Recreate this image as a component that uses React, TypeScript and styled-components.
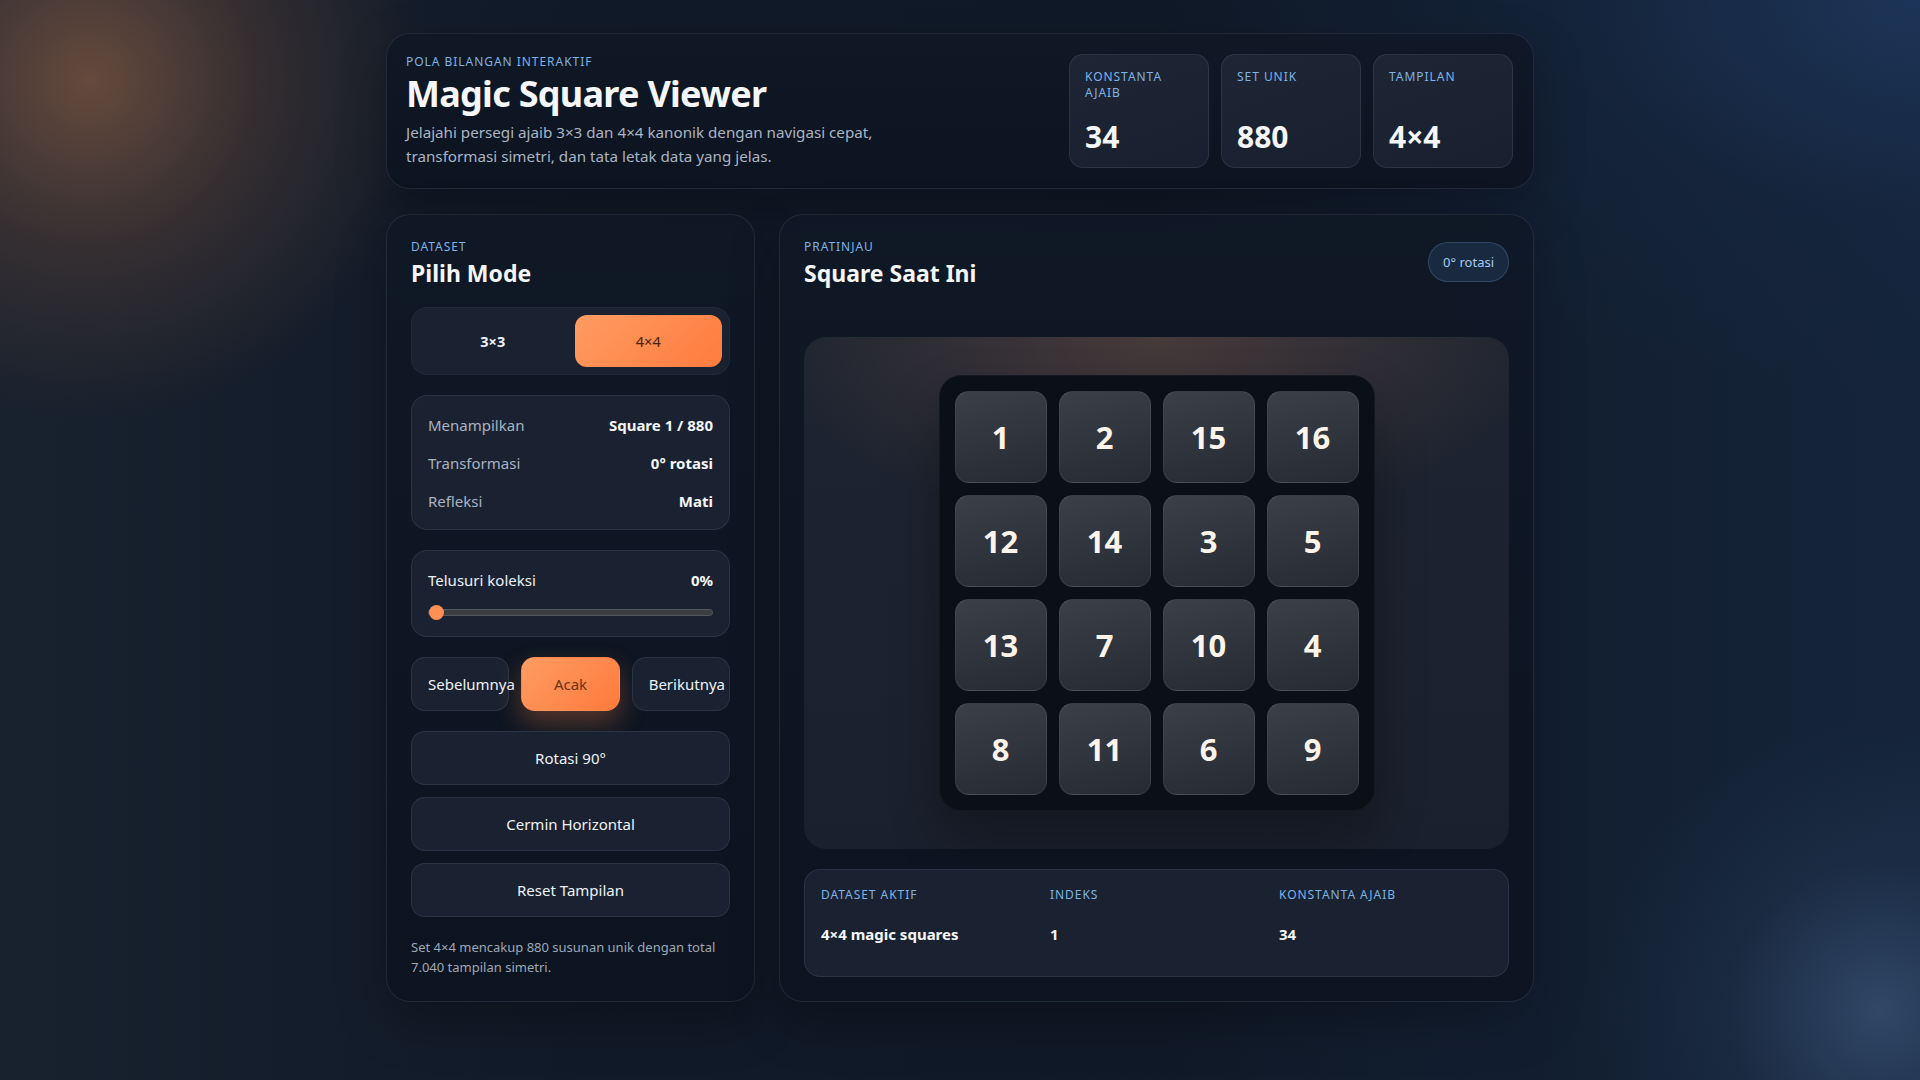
import { useState } from "react";
import styled, { createGlobalStyle } from "styled-components";

const SQUARE_4 = [
  [1, 2, 15, 16],
  [12, 14, 3, 5],
  [13, 7, 10, 4],
  [8, 11, 6, 9],
];

const SQUARE_3 = [
  [2, 7, 6],
  [9, 5, 1],
  [4, 3, 8],
];

type Mode = "3x3" | "4x4";

const rotate = (grid: number[][]) =>
  grid[0].map((_, c) => grid.map((row) => row[c]).reverse());

const GlobalStyle = createGlobalStyle`
  * { box-sizing: border-box; }
  html, body {
    margin: 0;
    min-height: 100%;
    background: #111926;
  }
  body {
    font-family: "Noto Sans", "Open Sans", sans-serif;
    color: #eef2f7;
  }
  button { font-family: inherit; }
`;

export default function App() {
  const [mode, setMode] = useState<Mode>("4x4");
  const [turns, setTurns] = useState(0);
  const [mirror, setMirror] = useState(false);

  let grid = mode === "4x4" ? SQUARE_4 : SQUARE_3;
  for (let i = 0; i < turns; i++) grid = rotate(grid);
  if (mirror) grid = grid.map((row) => [...row].reverse());

  const total = mode === "4x4" ? 880 : 1;
  const constant = mode === "4x4" ? 34 : 15;
  const size = mode === "4x4" ? "4×4" : "3×3";
  const rotationLabel = `${turns * 90}° rotasi`;

  const reset = () => {
    setTurns(0);
    setMirror(false);
  };

  return (
    <>
      <GlobalStyle />
      <Page>
        <Container>
          <Hero>
            <HeroText>
              <Eyebrow>Pola Bilangan Interaktif</Eyebrow>
              <HeroTitle>Magic Square Viewer</HeroTitle>
              <HeroLead>
                Jelajahi persegi ajaib 3×3 dan 4×4 kanonik dengan navigasi cepat,
                transformasi simetri, dan tata letak data yang jelas.
              </HeroLead>
            </HeroText>
            <Stats>
              <StatCard>
                <Eyebrow>Konstanta Ajaib</Eyebrow>
                <StatValue>{constant}</StatValue>
              </StatCard>
              <StatCard>
                <Eyebrow>Set Unik</Eyebrow>
                <StatValue>{total}</StatValue>
              </StatCard>
              <StatCard>
                <Eyebrow>Tampilan</Eyebrow>
                <StatValue>{size}</StatValue>
              </StatCard>
            </Stats>
          </Hero>

          <Layout>
            <Panel>
              <div>
                <Eyebrow>Dataset</Eyebrow>
                <PanelTitle>Pilih Mode</PanelTitle>
              </div>

              <Segmented>
                <SegmentButton $active={mode === "3x3"} onClick={() => { setMode("3x3"); reset(); }}>
                  3×3
                </SegmentButton>
                <SegmentButton $active={mode === "4x4"} onClick={() => { setMode("4x4"); reset(); }}>
                  4×4
                </SegmentButton>
              </Segmented>

              <InfoBox>
                <InfoRow>
                  <span>Menampilkan</span>
                  <strong>Square 1 / {total}</strong>
                </InfoRow>
                <InfoRow>
                  <span>Transformasi</span>
                  <strong>{rotationLabel}</strong>
                </InfoRow>
                <InfoRow>
                  <span>Refleksi</span>
                  <strong>{mirror ? "Aktif" : "Mati"}</strong>
                </InfoRow>
              </InfoBox>

              <SliderBox>
                <InfoRow>
                  <span>Telusuri koleksi</span>
                  <strong>0%</strong>
                </InfoRow>
                <Range type="range" min={0} max={total - 1} defaultValue={0} />
              </SliderBox>

              <NavRow>
                <ActionButton>Sebelumnya</ActionButton>
                <ActionButton $primary>Acak</ActionButton>
                <ActionButton>Berikutnya</ActionButton>
              </NavRow>

              <ActionStack>
                <ActionButton onClick={() => setTurns((t) => (t + 1) % 4)}>Rotasi 90°</ActionButton>
                <ActionButton onClick={() => setMirror((m) => !m)}>Cermin Horizontal</ActionButton>
                <ActionButton onClick={reset}>Reset Tampilan</ActionButton>
              </ActionStack>

              <Note>
                Set 4×4 mencakup 880 susunan unik dengan total 7.040 tampilan simetri.
              </Note>
            </Panel>

            <Panel>
              <PreviewHead>
                <div>
                  <Eyebrow>Pratinjau</Eyebrow>
                  <PanelTitle>Square Saat Ini</PanelTitle>
                </div>
                <Pill>{rotationLabel}</Pill>
              </PreviewHead>

              <Stage>
                <Board $cols={grid.length}>
                  {grid.flat().map((n, i) => (
                    <Tile key={i}>{n}</Tile>
                  ))}
                </Board>
              </Stage>

              <Summary>
                <div>
                  <Eyebrow>Dataset Aktif</Eyebrow>
                  <SummaryValue>{size} magic squares</SummaryValue>
                </div>
                <div>
                  <Eyebrow>Indeks</Eyebrow>
                  <SummaryValue>1</SummaryValue>
                </div>
                <div>
                  <Eyebrow>Konstanta Ajaib</Eyebrow>
                  <SummaryValue>{constant}</SummaryValue>
                </div>
              </Summary>
            </Panel>
          </Layout>
        </Container>
      </Page>
    </>
  );
}

const Page = styled.div`
  min-height: 100vh;
  padding: 33px 16px 40px;
  background:
    radial-gradient(circle at 90px 80px, rgba(128, 88, 66, 0.75) 0, rgba(100, 70, 56, 0.38) 170px, rgba(20, 28, 40, 0) 340px),
    radial-gradient(circle at 1880px 1010px, rgba(60, 86, 122, 0.7) 0, rgba(40, 62, 92, 0.3) 150px, rgba(20, 30, 46, 0) 290px),
    radial-gradient(ellipse at 100% 0%, rgba(34, 66, 112, 0.55) 0, rgba(24, 46, 80, 0.2) 380px, rgba(17, 25, 38, 0) 700px),
    linear-gradient(90deg, #18212e 0%, #111a28 30%, #101927 60%, #15243a 100%);
`;

const Container = styled.div`
  max-width: 1148px;
  margin: 0 auto;
  display: flex;
  flex-direction: column;
  gap: 25px;
`;

const Card = styled.section`
  background: linear-gradient(180deg, rgba(16, 24, 38, 0.96), rgba(13, 20, 33, 0.96));
  border: 1px solid rgba(148, 163, 184, 0.14);
  border-radius: 24px;
  box-shadow: 0 20px 50px rgba(0, 0, 0, 0.25);
`;

const Hero = styled(Card)`
  display: flex;
  align-items: center;
  justify-content: space-between;
  padding: 20px 20px 20px 19px;
  min-height: 156px;
`;

const HeroText = styled.div`
  max-width: 500px;
`;

const Eyebrow = styled.div`
  font-size: 12px;
  line-height: 16px;
  letter-spacing: 0.08em;
  text-transform: uppercase;
  color: #7fb2e5;
`;

const HeroTitle = styled.h1`
  margin: 4px 0 0;
  font-size: 36px;
  line-height: 40px;
  font-weight: 700;
  letter-spacing: -0.02em;
  color: #f4f6f9;
`;

const HeroLead = styled.p`
  margin: 6px 0 0;
  font-size: 15.2px;
  line-height: 24px;
  color: #aab4c2;
`;

const Stats = styled.div`
  display: grid;
  grid-template-columns: repeat(3, 140px);
  gap: 12px;
`;

const StatCard = styled.div`
  height: 114px;
  display: flex;
  flex-direction: column;
  justify-content: space-between;
  padding: 14px 15px 12px;
  border-radius: 14px;
  background: linear-gradient(160deg, #1e2635, #182030);
  border: 1px solid rgba(148, 163, 184, 0.14);
`;

const StatValue = styled.div`
  font-size: 30px;
  line-height: 36px;
  font-weight: 700;
  color: #f4f6f9;
`;

const Layout = styled.div`
  display: grid;
  grid-template-columns: 369px 1fr;
  gap: 24px;
`;

const Panel = styled(Card)`
  display: flex;
  flex-direction: column;
  gap: 20px;
  padding: 24px;
`;

const PanelTitle = styled.h2`
  margin: 4px 0 0;
  font-size: 23px;
  line-height: 28px;
  font-weight: 700;
  color: #f4f6f9;
`;

const Inset = styled.div`
  background: #1a2231;
  border: 1px solid rgba(148, 163, 184, 0.14);
  border-radius: 16px;
`;

const Segmented = styled(Inset)`
  display: grid;
  grid-template-columns: 1fr 1fr;
  gap: 8px;
  padding: 7px;
  border-color: rgba(148, 163, 184, 0.06);
`;

const SegmentButton = styled.button<{ $active?: boolean }>`
  height: 52px;
  border: 0;
  border-radius: 12px;
  font-size: 14.5px;
  cursor: pointer;
  background: ${({ $active }) =>
    $active ? "linear-gradient(135deg, #ff9c62, #ff7b3e)" : "transparent"};
  color: ${({ $active }) => ($active ? "#4a2511" : "#eef2f7")};
  font-weight: ${({ $active }) => ($active ? 400 : 700)};
`;

const InfoBox = styled(Inset)`
  display: flex;
  flex-direction: column;
  gap: 16px;
  padding: 18px 16px 17px;
`;

const InfoRow = styled.div`
  display: flex;
  justify-content: space-between;
  align-items: center;
  font-size: 15px;
  line-height: 22px;

  span {
    color: #a9b3c1;
  }
  strong {
    font-weight: 700;
    color: #f4f6f9;
  }
`;

const SliderBox = styled(Inset)`
  display: flex;
  flex-direction: column;
  gap: 13px;
  padding: 18px 16px 16px;

  ${InfoRow} span {
    color: #eef2f7;
  }
`;

const Range = styled.input`
  -webkit-appearance: none;
  appearance: none;
  width: 100%;
  height: 16px;
  margin: 0;
  background: transparent;

  &::-webkit-slider-runnable-track {
    height: 7px;
    border-radius: 999px;
    background: #3b3d42;
    border: 1px solid #55585e;
  }
  &::-webkit-slider-thumb {
    -webkit-appearance: none;
    width: 15px;
    height: 15px;
    margin-top: -5px;
    border-radius: 50%;
    background: #ff8f55;
    border: 0;
  }
`;

const NavRow = styled.div`
  display: grid;
  grid-template-columns: repeat(3, minmax(0, 1fr));
  gap: 12px;
`;

const ActionStack = styled.div`
  display: flex;
  flex-direction: column;
  gap: 12px;
`;

const ActionButton = styled.button<{ $primary?: boolean }>`
  height: 54px;
  min-width: 0;
  padding: 0 16px;
  border-radius: 14px;
  font-size: 15px;
  white-space: nowrap;
  cursor: pointer;
  border: 1px solid ${({ $primary }) => ($primary ? "transparent" : "rgba(148, 163, 184, 0.14)")};
  background: ${({ $primary }) =>
    $primary ? "linear-gradient(135deg, #ff9c62, #ff7a3d)" : "#1a2231"};
  color: ${({ $primary }) => ($primary ? "#6a3416" : "#eef2f7")};
  box-shadow: ${({ $primary }) => ($primary ? "0 12px 26px rgba(255, 128, 60, 0.3)" : "none")};
`;

const Note = styled.p`
  margin: 0;
  font-size: 13px;
  line-height: 20px;
  color: #9ea8b7;
`;

const PreviewHead = styled.div`
  display: flex;
  justify-content: space-between;
  align-items: flex-start;
`;

const Pill = styled.div`
  height: 40px;
  margin-top: 3px;
  padding: 0 14px;
  display: flex;
  align-items: center;
  border-radius: 999px;
  font-size: 13px;
  color: #a9cbf0;
  background: #192a40;
  border: 1px solid rgba(127, 178, 229, 0.22);
`;

const Stage = styled.div`
  flex: 1;
  margin-top: 30px;
  display: flex;
  align-items: center;
  justify-content: center;
  border-radius: 22px;
  background:
    radial-gradient(ellipse 55% 38% at 50% 0%, rgba(120, 86, 70, 0.45), rgba(40, 40, 50, 0) 100%),
    linear-gradient(180deg, #1e2431, #1a202d);
`;

const Board = styled.div<{ $cols: number }>`
  display: grid;
  grid-template-columns: repeat(${({ $cols }) => $cols}, 92px);
  gap: 12px;
  padding: 15px;
  border-radius: 22px;
  background: #0b0f18;
  border: 1px solid rgba(255, 255, 255, 0.04);
  box-shadow: 0 24px 50px rgba(0, 0, 0, 0.3);
`;

const Tile = styled.div`
  height: 92px;
  display: flex;
  align-items: center;
  justify-content: center;
  border-radius: 14px;
  background: linear-gradient(165deg, #3b3f48, #252a33);
  border: 1px solid rgba(255, 255, 255, 0.08);
  font-size: 31px;
  font-weight: 700;
  color: #fcf4ea;
`;

const Summary = styled(Inset)`
  display: grid;
  grid-template-columns: repeat(3, 1fr);
  gap: 16px;
  padding: 17px 16px 31px;
`;

const SummaryValue = styled.div`
  margin-top: 20px;
  font-size: 15px;
  line-height: 22px;
  font-weight: 700;
  color: #f4f6f9;
`;
